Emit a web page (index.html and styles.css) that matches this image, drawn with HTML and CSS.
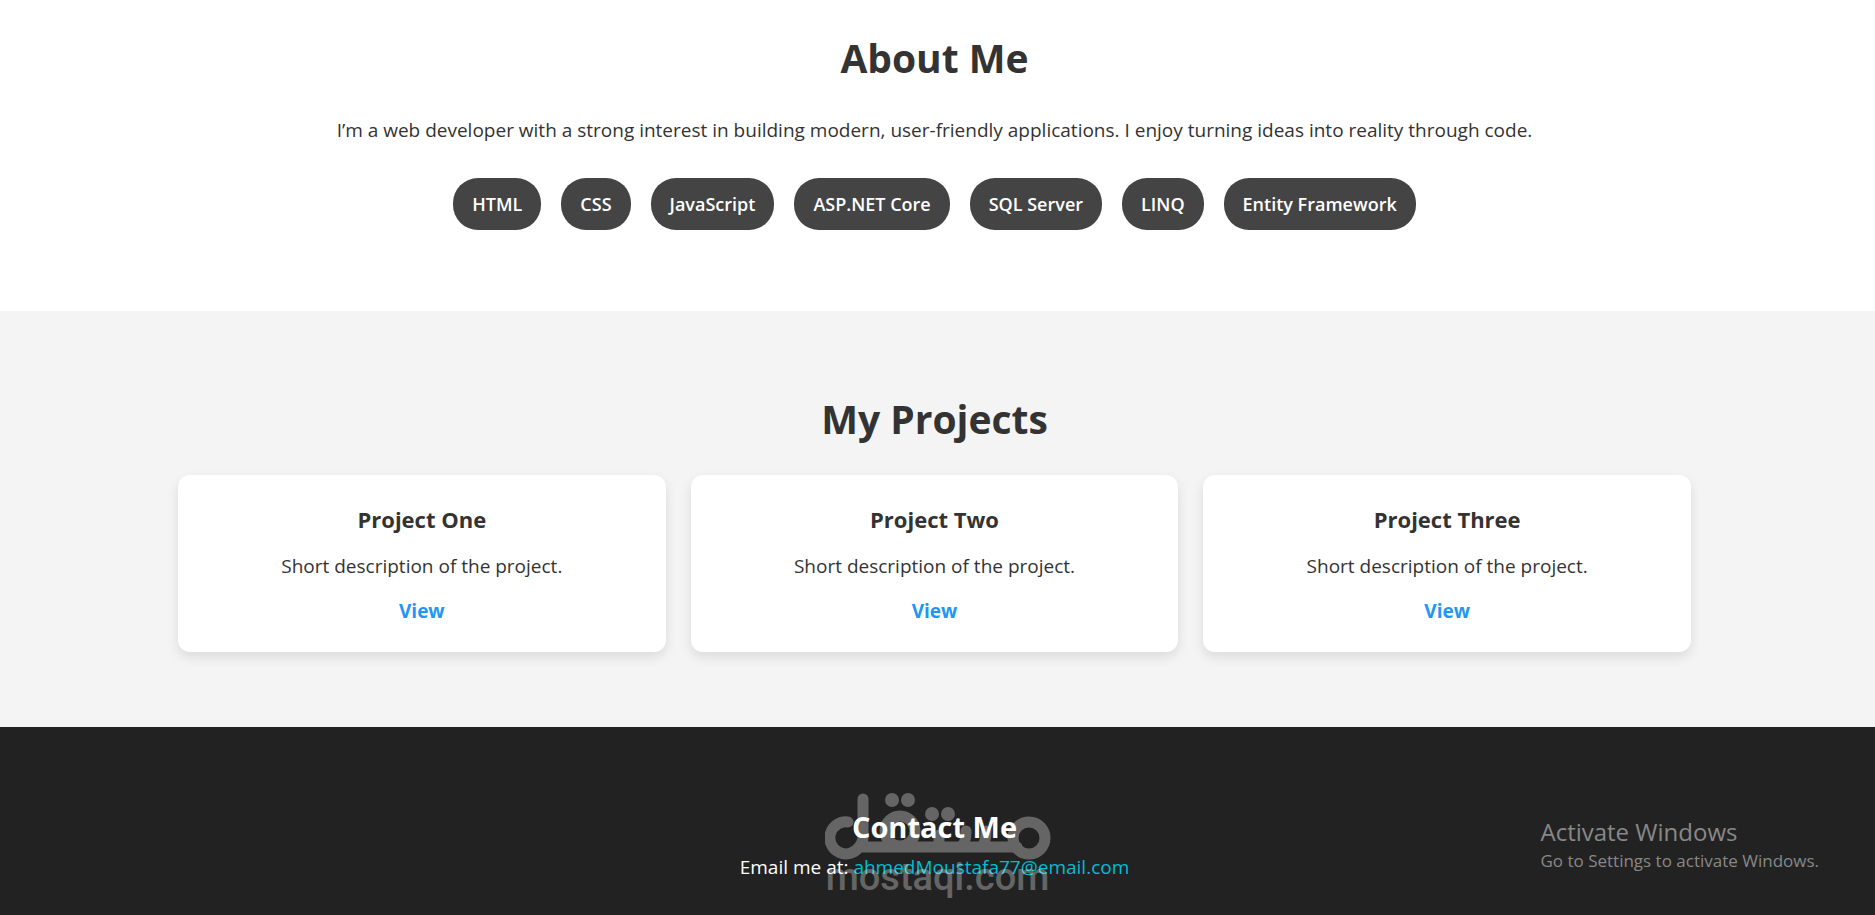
FILE: index.html
```html
<!DOCTYPE html>
<html lang="en">
<head>
    <meta charset="UTF-8">
    <meta name="viewport" content="width=device-width, initial-scale=1.0">
    <title>Portfolio</title>
    <link rel="stylesheet" href="styles.css">
</head>
<body>
    <section class="about" id="about">
        <h2>About Me</h2>
        <p>I’m a web developer with a strong interest in building modern, user-friendly applications. I enjoy turning ideas into reality through code.</p>
        <ul class="skills">
            <li>HTML</li>
            <li>CSS</li>
            <li>JavaScript</li>
            <li>ASP.NET Core</li>
            <li>SQL Server</li>
            <li>LINQ</li>
            <li>Entity Framework</li>
        </ul>
    </section>

    <section class="projects" id="projects">
        <h2>My Projects</h2>
        <div class="project-grid">
            <div class="card">
                <h3>Project One</h3>
                <p>Short description of the project.</p>
                <a href="#">View</a>
            </div>
            <div class="card">
                <h3>Project Two</h3>
                <p>Short description of the project.</p>
                <a href="#">View</a>
            </div>
            <div class="card">
                <h3>Project Three</h3>
                <p>Short description of the project.</p>
                <a href="#">View</a>
            </div>
        </div>
    </section>

    <footer class="contact" id="contact">
        <h2>Contact Me</h2>
        <p>Email me at: <a href="mailto:ahmedMoustafa77@email.com">ahmedMoustafa77@email.com</a></p>

        <div class="watermark">
            <svg class="watermark-logo" viewBox="0 0 226 68" aria-hidden="true">
                <path d="M23 29a16 16 0 1 0 11 25q4-4 4-10V6M34 54H192M114 54V42M136 54q5-4 5-16M156 54q5-4 5-16" />
                <circle cx="75" cy="38" r="15" />
                <circle cx="204" cy="45" r="16" />
                <circle class="dot" cx="67" cy="7" r="7" />
                <circle class="dot" cx="83" cy="7" r="7" />
                <circle class="dot" cx="107" cy="21" r="7" />
                <circle class="dot" cx="123" cy="21" r="7" />
            </svg>
            <span>mostaqi.com</span>
        </div>

        <div class="activate">
            <strong>Activate Windows</strong>
            <span>Go to Settings to activate Windows.</span>
        </div>
    </footer>
</body>
</html>
```
FILE: styles.css
```css
* {
    margin: 0;
    padding: 0;
    box-sizing: border-box;
}

body {
    font-family: "Segoe UI", "Open Sans", sans-serif;
    font-size: 19px;
    line-height: 32px;
    color: #333;
    background-color: #222;
    text-align: center;
}

section {
    padding: 76px 26px 75px 20px;
}

section h2 {
    font-size: 39px;
    line-height: 64px;
    margin-bottom: 24px;
}

/* About */
.about {
    background-color: #fff;
    padding-top: 26px;
    padding-bottom: 81px;
}

.skills {
    display: flex;
    flex-wrap: wrap;
    justify-content: center;
    gap: 20px;
    margin-top: 32px;
    list-style: none;
}

.skills li {
    background-color: #444;
    color: #fff;
    font-size: 18px;
    font-weight: 600;
    padding: 10px 19px;
    border-radius: 25px;
}

/* Projects */
.projects {
    background-color: #f4f4f4;
}

.project-grid {
    display: grid;
    grid-template-columns: repeat(3, 1fr);
    gap: 25px;
    max-width: 1513px;
    margin: 0 auto;
}

.card {
    background-color: #fff;
    padding: 25px;
    border-radius: 12px;
    box-shadow: 0 5px 12px rgba(0, 0, 0, 0.1);
}

.card h3 {
    font-size: 22px;
    line-height: 38px;
    margin-bottom: 12px;
}

.card p {
    margin-bottom: 13px;
}

.card a {
    color: #2196f3;
    font-weight: bold;
    text-decoration: none;
}

/* Contact */
.contact {
    position: relative;
    background-color: #222;
    color: #fff;
    padding: 76px 26px 32px 20px;
}

.contact h2 {
    font-size: 29px;
    line-height: 48px;
}

.contact a {
    color: #00bcd4;
    text-decoration: none;
}

.watermark {
    position: absolute;
    top: 66px;
    left: 50%;
    width: 226px;
    margin-left: -113px;
    opacity: 0.3;
    pointer-events: none;
}

.watermark-logo {
    display: block;
    fill: none;
    stroke: #fff;
    stroke-width: 11;
    stroke-linecap: round;
}

.watermark-logo .dot {
    fill: #fff;
    stroke: none;
}

.watermark span {
    display: block;
    font-family: Roboto, sans-serif;
    font-size: 38px;
    font-weight: 500;
    line-height: 32px;
}

.activate {
    position: absolute;
    top: 90px;
    right: 56px;
    color: #888;
    line-height: 29px;
    text-align: left;
}

.activate strong,
.activate span {
    display: block;
    font-weight: normal;
}

.activate strong {
    font-size: 24px;
}

.activate span {
    font-size: 17px;
}
```
